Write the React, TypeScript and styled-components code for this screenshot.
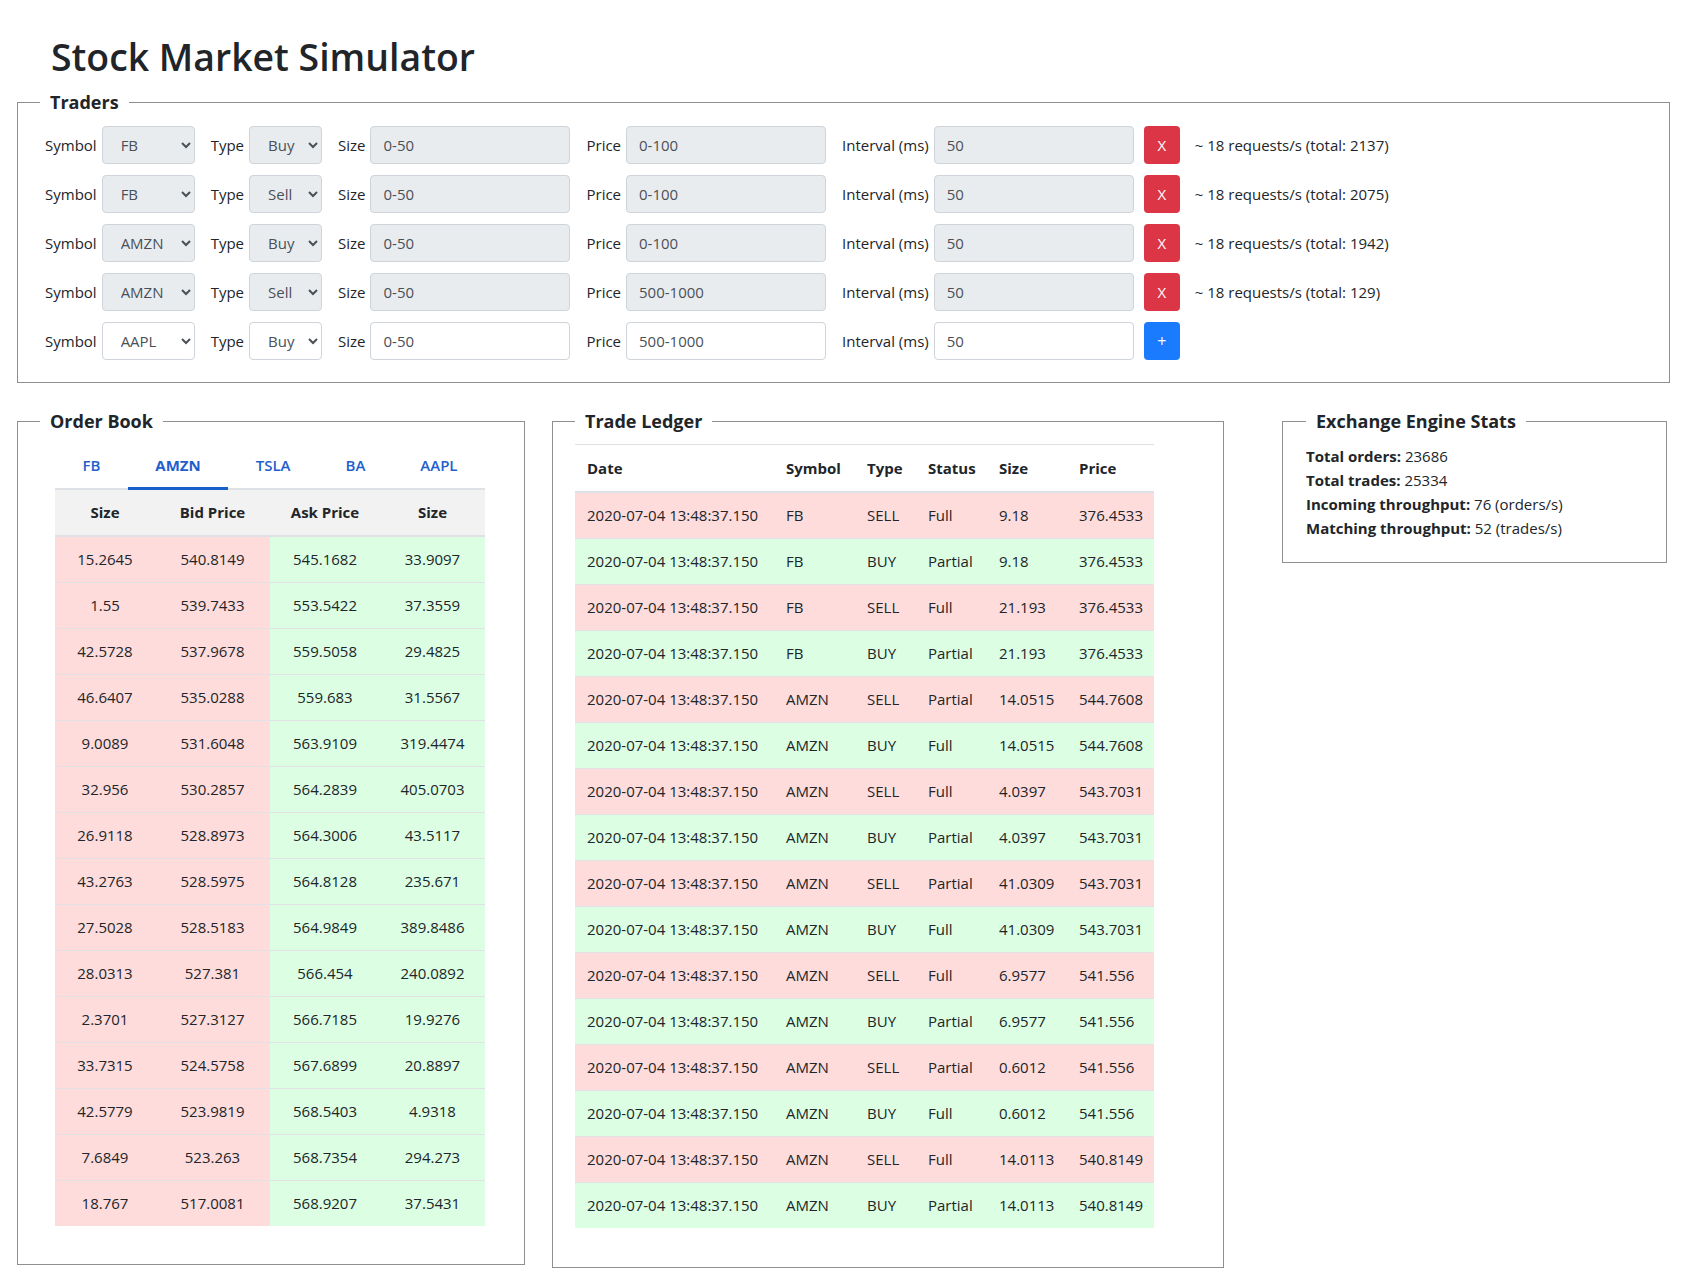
import React from "react";
import styled, { createGlobalStyle } from "styled-components";

const GlobalStyle = createGlobalStyle`
  html, body { margin: 0; padding: 0; background: #fff; }
  body {
    font-family: "Open Sans", "Noto Sans", "Liberation Sans", sans-serif;
    font-size: 15px;
    line-height: 24px;
    color: #212529;
  }
  * { box-sizing: border-box; }
`;

const Page = styled.div`
  padding: 33px 0 40px 17px;
  width: 1686px;
`;

const Title = styled.h1`
  margin: 0 0 9px 34px;
  font-size: 37.4px;
  line-height: 47px;
  font-weight: 600;
  color: #212529;
`;

const Panel = styled.fieldset<{ $width: number; $ml?: number; $px?: number; $pb?: number }>`
  margin: 0 0 0 ${(p) => p.$ml ?? 0}px;
  width: ${(p) => p.$width}px;
  min-width: 0;
  border: 1px solid #8f8f8f;
  padding: 9px ${(p) => p.$px ?? 22}px ${(p) => p.$pb ?? 22}px;
  flex: none;
`;

const Legend = styled.legend`
  padding: 0 10px;
  font-size: 18px;
  line-height: 27px;
  font-weight: 700;
  color: #212529;
`;

/* ---------- Traders ---------- */

const TraderRows = styled.div`
  display: flex;
  flex-direction: column;
  gap: 11px;
  padding: 1px 0 0 5px;
`;

const TraderRow = styled.div`
  display: flex;
  align-items: center;
  height: 38px;
`;

const FieldLabel = styled.label<{ $first?: boolean }>`
  margin: 0 5px 0 ${(p) => (p.$first ? 0 : 16)}px;
  white-space: nowrap;
`;

const Select = styled.select<{ $w: number }>`
  width: ${(p) => p.$w}px;
  height: 38px;
  padding: 0 4px 0 14px;
  border: 1px solid #ced4da;
  border-radius: 4px;
  background-color: #fff;
  color: #495057;
  font-family: inherit;
  font-size: 15px;
  &:disabled {
    background-color: #e9ecef;
    color: #495057;
    opacity: 1;
  }
`;

const TextInput = styled.input`
  width: 200px;
  height: 38px;
  padding: 0 12px;
  border: 1px solid #ced4da;
  border-radius: 4px;
  background-color: #fff;
  color: #495057;
  font-family: inherit;
  font-size: 15px;
  &:disabled {
    background-color: #e9ecef;
    color: #495057;
    opacity: 1;
  }
`;

const ActionButton = styled.button<{ $kind: "remove" | "add" }>`
  margin-left: 10px;
  width: 36px;
  height: 38px;
  border: none;
  border-radius: 4px;
  background: ${(p) => (p.$kind === "remove" ? "#dc3545" : "#1a7bff")};
  color: #fff;
  font-family: inherit;
  font-size: ${(p) => (p.$kind === "remove" ? "15px" : "16px")};
  padding: 0;
  line-height: 38px;
`;

const RateText = styled.span`
  margin-left: 15px;
  white-space: nowrap;
`;

/* ---------- Bottom section ---------- */

const BottomRow = styled.div`
  display: flex;
  align-items: flex-start;
  margin-top: 25px;
`;

const BookInner = styled.div`
  width: 430px;
  margin-left: 15px;
`;

const Tabs = styled.div`
  display: flex;
  border-bottom: 2px solid #dee2e6;
`;

const Tab = styled.div<{ $active?: boolean }>`
  flex: 1 1 auto;
  text-align: center;
  padding: 9px 8px 10px;
  margin-bottom: -2px;
  font-size: 15px;
  line-height: 24px;
  font-weight: ${(p) => (p.$active ? 700 : 600)};
  color: #1f5fcd;
  border-bottom: 3px solid ${(p) => (p.$active ? "#1760c9" : "transparent")};
`;

const Table = styled.table<{ $w: number }>`
  width: ${(p) => p.$w}px;
  border-collapse: collapse;
  table-layout: fixed;
`;

const BookHead = styled.th`
  background: #f2f2f2;
  text-align: center;
  font-weight: 700;
  padding: 10px 6px 11px;
  line-height: 24px;
  border-bottom: 2px solid #dee2e6;
`;

const BookCell = styled.td<{ $side: "bid" | "ask" }>`
  background: ${(p) => (p.$side === "bid" ? "#ffdcdc" : "#dcffe4")};
  text-align: center;
  padding: 10px 6px 11px;
  line-height: 24px;
  border-top: 1px solid #e2e2e6;
`;

const LedgerHead = styled.th`
  text-align: left;
  font-weight: 700;
  padding: 11px 12px 11px;
  line-height: 24px;
  border-top: 1px solid #dee2e6;
  border-bottom: 2px solid #dee2e6;
  white-space: nowrap;
`;

const LedgerRow = styled.tr<{ $sell: boolean }>`
  background: ${(p) => (p.$sell ? "#ffdcdc" : "#dcffe4")};
`;

const LedgerCell = styled.td`
  padding: 10px 12px 11px;
  line-height: 24px;
  border-top: 1px solid #e2e2e6;
  white-space: nowrap;
`;

const StatLine = styled.div`
  line-height: 24px;
`;

const StatKey = styled.b`
  font-weight: 700;
`;

/* ---------- Data ---------- */

type Trader = {
  symbol: string;
  type: string;
  size: string;
  price: string;
  interval: string;
  total?: number;
};

const traders: Trader[] = [
  { symbol: "FB", type: "Buy", size: "0-50", price: "0-100", interval: "50", total: 2137 },
  { symbol: "FB", type: "Sell", size: "0-50", price: "0-100", interval: "50", total: 2075 },
  { symbol: "AMZN", type: "Buy", size: "0-50", price: "0-100", interval: "50", total: 1942 },
  { symbol: "AMZN", type: "Sell", size: "0-50", price: "500-1000", interval: "50", total: 129 },
  { symbol: "AAPL", type: "Buy", size: "0-50", price: "500-1000", interval: "50" },
];

const symbols = ["FB", "AMZN", "TSLA", "BA", "AAPL"];

const book: string[][] = [
  ["15.2645", "540.8149", "545.1682", "33.9097"],
  ["1.55", "539.7433", "553.5422", "37.3559"],
  ["42.5728", "537.9678", "559.5058", "29.4825"],
  ["46.6407", "535.0288", "559.683", "31.5567"],
  ["9.0089", "531.6048", "563.9109", "319.4474"],
  ["32.956", "530.2857", "564.2839", "405.0703"],
  ["26.9118", "528.8973", "564.3006", "43.5117"],
  ["43.2763", "528.5975", "564.8128", "235.671"],
  ["27.5028", "528.5183", "564.9849", "389.8486"],
  ["28.0313", "527.381", "566.454", "240.0892"],
  ["2.3701", "527.3127", "566.7185", "19.9276"],
  ["33.7315", "524.5758", "567.6899", "20.8897"],
  ["42.5779", "523.9819", "568.5403", "4.9318"],
  ["7.6849", "523.263", "568.7354", "294.273"],
  ["18.767", "517.0081", "568.9207", "37.5431"],
];

const ledger: [string, string, string, string, string][] = [
  ["FB", "SELL", "Full", "9.18", "376.4533"],
  ["FB", "BUY", "Partial", "9.18", "376.4533"],
  ["FB", "SELL", "Full", "21.193", "376.4533"],
  ["FB", "BUY", "Partial", "21.193", "376.4533"],
  ["AMZN", "SELL", "Partial", "14.0515", "544.7608"],
  ["AMZN", "BUY", "Full", "14.0515", "544.7608"],
  ["AMZN", "SELL", "Full", "4.0397", "543.7031"],
  ["AMZN", "BUY", "Partial", "4.0397", "543.7031"],
  ["AMZN", "SELL", "Partial", "41.0309", "543.7031"],
  ["AMZN", "BUY", "Full", "41.0309", "543.7031"],
  ["AMZN", "SELL", "Full", "6.9577", "541.556"],
  ["AMZN", "BUY", "Partial", "6.9577", "541.556"],
  ["AMZN", "SELL", "Partial", "0.6012", "541.556"],
  ["AMZN", "BUY", "Full", "0.6012", "541.556"],
  ["AMZN", "SELL", "Full", "14.0113", "540.8149"],
  ["AMZN", "BUY", "Partial", "14.0113", "540.8149"],
];

const bookCols = [100, 115, 110, 105];
const ledgerCols = [199, 81, 61, 71, 80, 87];

export default function App() {
  return (
    <>
      <GlobalStyle />
      <Page>
        <Title>Stock Market Simulator</Title>

        <Panel $width={1653}>
          <Legend>Traders</Legend>
          <TraderRows>
            {traders.map((t, i) => {
              const running = t.total !== undefined;
              return (
                <TraderRow key={i}>
                  <FieldLabel $first>Symbol</FieldLabel>
                  <Select $w={93} defaultValue={t.symbol} disabled={running}>
                    {symbols.map((s) => (
                      <option key={s}>{s}</option>
                    ))}
                  </Select>
                  <FieldLabel>Type</FieldLabel>
                  <Select $w={73} defaultValue={t.type} disabled={running}>
                    <option>Buy</option>
                    <option>Sell</option>
                  </Select>
                  <FieldLabel>Size</FieldLabel>
                  <TextInput defaultValue={t.size} disabled={running} />
                  <FieldLabel>Price</FieldLabel>
                  <TextInput defaultValue={t.price} disabled={running} />
                  <FieldLabel>Interval (ms)</FieldLabel>
                  <TextInput defaultValue={t.interval} disabled={running} />
                  {running ? (
                    <>
                      <ActionButton $kind="remove">X</ActionButton>
                      <RateText>~ 18 requests/s (total: {t.total})</RateText>
                    </>
                  ) : (
                    <ActionButton $kind="add">+</ActionButton>
                  )}
                </TraderRow>
              );
            })}
          </TraderRows>
        </Panel>

        <BottomRow>
          <Panel $width={508} $pb={38}>
            <Legend>Order Book</Legend>
            <BookInner>
              <Tabs>
                {symbols.map((s) => (
                  <Tab key={s} $active={s === "AMZN"}>
                    {s}
                  </Tab>
                ))}
              </Tabs>
              <Table $w={430}>
                <colgroup>
                  {bookCols.map((w, i) => (
                    <col key={i} style={{ width: w }} />
                  ))}
                </colgroup>
                <thead>
                  <tr>
                    <BookHead>Size</BookHead>
                    <BookHead>Bid Price</BookHead>
                    <BookHead>Ask Price</BookHead>
                    <BookHead>Size</BookHead>
                  </tr>
                </thead>
                <tbody>
                  {book.map((r, i) => (
                    <tr key={i}>
                      <BookCell $side="bid">{r[0]}</BookCell>
                      <BookCell $side="bid">{r[1]}</BookCell>
                      <BookCell $side="ask">{r[2]}</BookCell>
                      <BookCell $side="ask">{r[3]}</BookCell>
                    </tr>
                  ))}
                </tbody>
              </Table>
            </BookInner>
          </Panel>

          <Panel $width={672} $ml={27} $pb={39}>
            <Legend>Trade Ledger</Legend>
            <Table $w={579}>
              <colgroup>
                {ledgerCols.map((w, i) => (
                  <col key={i} style={{ width: w }} />
                ))}
              </colgroup>
              <thead>
                <tr>
                  <LedgerHead>Date</LedgerHead>
                  <LedgerHead>Symbol</LedgerHead>
                  <LedgerHead>Type</LedgerHead>
                  <LedgerHead>Status</LedgerHead>
                  <LedgerHead>Size</LedgerHead>
                  <LedgerHead>Price</LedgerHead>
                </tr>
              </thead>
              <tbody>
                {ledger.map((r, i) => (
                  <LedgerRow key={i} $sell={r[1] === "SELL"}>
                    <LedgerCell>2020-07-04 13:48:37.150</LedgerCell>
                    <LedgerCell>{r[0]}</LedgerCell>
                    <LedgerCell>{r[1]}</LedgerCell>
                    <LedgerCell>{r[2]}</LedgerCell>
                    <LedgerCell>{r[3]}</LedgerCell>
                    <LedgerCell>{r[4]}</LedgerCell>
                  </LedgerRow>
                ))}
              </tbody>
            </Table>
          </Panel>

          <Panel $width={385} $ml={58} $px={23}>
            <Legend>Exchange Engine Stats</Legend>
            <StatLine>
              <StatKey>Total orders:</StatKey> 23686
            </StatLine>
            <StatLine>
              <StatKey>Total trades:</StatKey> 25334
            </StatLine>
            <StatLine>
              <StatKey>Incoming throughput:</StatKey> 76 (orders/s)
            </StatLine>
            <StatLine>
              <StatKey>Matching throughput:</StatKey> 52 (trades/s)
            </StatLine>
          </Panel>
        </BottomRow>
      </Page>
    </>
  );
}
